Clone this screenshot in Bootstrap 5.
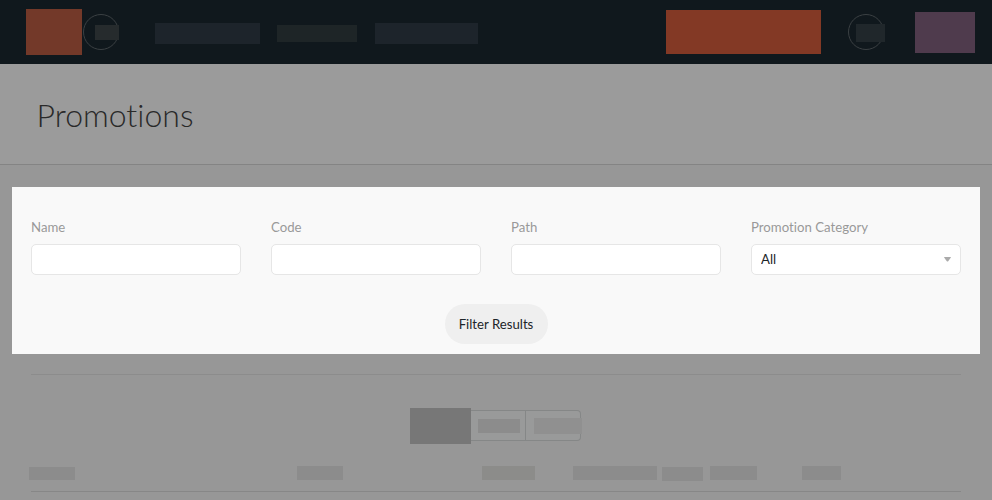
<!DOCTYPE html>
<html lang="en">
<head>
<meta charset="utf-8">
<meta name="viewport" content="width=device-width, initial-scale=1">
<title>Promotions</title>
<link href="https://cdn.jsdelivr.net/npm/bootstrap@5.3.0/dist/css/bootstrap.min.css" rel="stylesheet">
<style>
body{font-family:Lato,sans-serif;font-variant-ligatures:none;background:#979797;height:500px;overflow:hidden}
.topbar{height:64px;background:#10181d}
.topbar>*,.heads>*{flex:none}
.ph{height:var(--h);width:var(--w);margin-left:var(--g,0);margin-top:var(--t,0);background:var(--c,#8c8c8c)}
.ring{width:36px;height:36px;margin-top:14px;border:1px solid #3b4043;border-radius:50%}
.title-band{height:101px;background:#9b9b9b;border-bottom:1px solid #848484;padding-left:36.6px}
.title-band h1{font-size:32px;font-weight:300;line-height:40px;color:#292929;padding-top:31px}
.filters{margin:22px 12px 0;height:167px;background:#f9f9f9;padding:30px 19px 0}
.filters .row{--bs-gutter-x:30px}
.filters label{display:block;font-size:13.2px;letter-spacing:.01px;line-height:20px;color:#999;margin-bottom:7px}
.filters .form-control,.filters .form-select{height:31px;border:1px solid #e6e6e6;border-radius:5px;font-size:13.2px;line-height:20px;padding:4px 9px;color:#1c2529;background-color:#fff}
.filters .form-select{background-image:none;padding:3px 9px 5px}
.caret{right:10.5px;top:13px}
.btn-filter{width:103px;height:40px;border-radius:20px;background:#efefef;color:#1c2529;font-size:13.2px;line-height:20px;padding:0;margin-top:29px}
.rule{margin:0 31px;height:1px;background:#878787}
.rule-soft{margin-top:20px;background:#8c8c8c}
.pager{margin:33px 0 0 410px;height:36px}
.cell{height:31px;margin-top:2px;border:1px solid #858787;border-left:0;background:#999a9a}
.cell-last{border-radius:0 4px 4px 0}
.heads{height:47px;padding-left:29px}
</style>
</head>
<body>
<header class="topbar d-flex align-items-start">
  <div class="ph" style="--g:26px;--t:9px;--w:56px;--h:46px;--c:#733929"></div>
  <div class="ring" style="margin-left:1px"><div class="ph" style="--g:11px;--t:10px;--w:24px;--h:15px;--c:#262b2d"></div></div>
  <div class="ph" style="--g:36px;--t:23px;--w:105px;--h:21px;--c:#1d242b"></div>
  <div class="ph" style="--g:17px;--t:25px;--w:80px;--h:17px;--c:#1e2527"></div>
  <div class="ph" style="--g:18px;--t:23px;--w:103px;--h:21px;--c:#1d242b"></div>
  <div class="ph" style="--g:188px;--t:10px;--w:155px;--h:44px;--c:#833925"></div>
  <div class="ring" style="margin-left:27px"><div class="ph" style="--g:7px;--t:9px;--w:29px;--h:18px;--c:#20272b"></div></div>
  <div class="ph" style="--g:31px;--t:12px;--w:60px;--h:41px;--c:#4f3b4d"></div>
</header>
<div class="title-band"><h1 class="m-0">Promotions</h1></div>
<form class="filters">
  <div class="row">
    <div class="col-3"><label for="name">Name</label><input id="name" class="form-control" type="text"></div>
    <div class="col-3"><label for="code">Code</label><input id="code" class="form-control" type="text"></div>
    <div class="col-3"><label for="path">Path</label><input id="path" class="form-control" type="text"></div>
    <div class="col-3"><label for="category">Promotion Category</label>
      <div class="position-relative">
        <select id="category" class="form-select"><option>All</option></select>
        <svg class="caret position-absolute" width="7" height="5" viewBox="0 0 7 5"><path d="M.3 0h6.4Q7 .2 6.7.8L4.2 4.2q-.7.5-1.4 0L.3.8Q0 .2.3 0z" fill="#aaa"/></svg>
      </div>
    </div>
  </div>
  <div class="text-center"><button type="button" class="btn btn-filter">Filter Results</button></div>
</form>
<div class="rule rule-soft"></div>
<div class="pager d-flex align-items-start">
  <div class="ph" style="--w:61px;--h:36px;--c:#777"></div>
  <div class="cell" style="width:55px"><div class="ph" style="--g:7px;--t:8px;--w:42px;--h:14px"></div></div>
  <div class="cell cell-last" style="width:55px"><div class="ph" style="--g:8px;--t:7px;--w:48px;--h:16px;--c:#909090"></div></div>
</div>
<div class="heads d-flex align-items-start">
  <div class="ph" style="--t:23px;--w:46px;--h:13px"></div>
  <div class="ph" style="--g:222px;--t:22px;--w:46px;--h:14px"></div>
  <div class="ph" style="--g:139px;--t:22px;--w:53px;--h:14px;--c:#8c8c8a"></div>
  <div class="ph" style="--g:38px;--t:22px;--w:84px;--h:14px"></div>
  <div class="ph" style="--g:5px;--t:23px;--w:41px;--h:14px"></div>
  <div class="ph" style="--g:7px;--t:22px;--w:47px;--h:14px"></div>
  <div class="ph" style="--g:45px;--t:22px;--w:39px;--h:14px"></div>
</div>
<div class="rule"></div>
<script src="https://cdn.jsdelivr.net/npm/bootstrap@5.3.0/dist/js/bootstrap.bundle.min.js"></script>
</body>
</html>
